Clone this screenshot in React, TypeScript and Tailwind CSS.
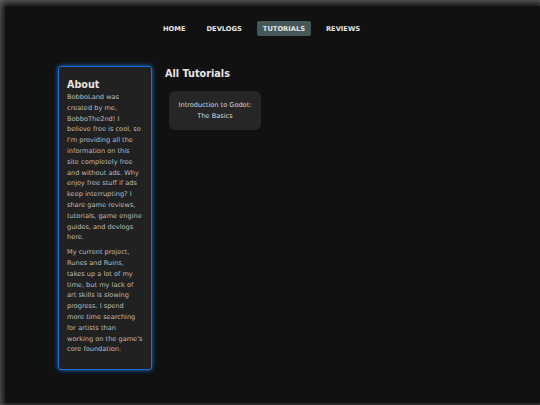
import React from "react";

const font = { fontFamily: '"DejaVu Sans", Verdana, sans-serif' };

export default function App() {
  const navItems = ["HOME", "DEVLOGS", "TUTORIALS", "REVIEWS"];
  return (
    <div className="h-[405px] w-[540px] overflow-hidden bg-[#6a6a6a]" style={font}>
      <div className="ml-[5px] mt-[6px] h-[397px] bg-[#111111] shadow-[0_0_8px_4px_#111111]">
        <nav className="flex gap-[9px] pl-[152px] pt-[15px]">
          {navItems.map((n) => (
            <div
              key={n}
              className={`flex h-[15px] items-center rounded-[2px] px-[6px] pt-[1px] text-[6.7px] font-bold leading-none text-[#e8e8e8] ${
                n === "TUTORIALS" ? "bg-[#465757]" : ""
              }`}
            >
              {n}
            </div>
          ))}
        </nav>
        <div className="mt-[30px] flex items-start pl-[53px]">
          <aside className="w-[94px] rounded-[3px] border-[1.5px] border-[#1f6fd6] bg-[#212121] pb-[10px] pl-[8px] pr-[8px] pt-[11px] shadow-[0_0_5px_#1f6fd6]">
            <h2 className="text-[9.6px] font-bold leading-[14px] text-[#e6e6e6]">About</h2>
            <p className="mb-[4px] text-[6.6px] leading-[10.8px] text-[#bdbdbd]">
              BobboLand was created by me, BobboThe2nd! I believe free is cool, so I'm providing all the information on this site completely free and without ads. Why enjoy free stuff if ads keep interrupting? I share game reviews, tutorials, game engine guides, and devlogs here.
            </p>
            <p className="mb-[4px] text-[6.6px] leading-[10.8px] text-[#bdbdbd]">
              My current project, Runes and Ruins, takes up a lot of my time, but my lack of art skills is slowing progress. I spend
              <br />
              more time searching for artists than working on the game's core foundation.
            </p>
          </aside>
          <main className="ml-[13px]">
            <h2 className="mt-[1px] text-[9.7px] font-bold leading-[14px] text-[#e6e6e6]">All Tutorials</h2>
            <div className="ml-[4px] mt-[10px] flex h-[39px] w-[92px] flex-col items-center justify-center rounded-[6px] bg-[#262626] pt-[1px] text-center text-[6.6px] leading-[11px] text-[#d8d8d8]">
              <span>Introduction to Godot:</span>
              <span>The Basics</span>
            </div>
          </main>
        </div>
      </div>
    </div>
  );
}
